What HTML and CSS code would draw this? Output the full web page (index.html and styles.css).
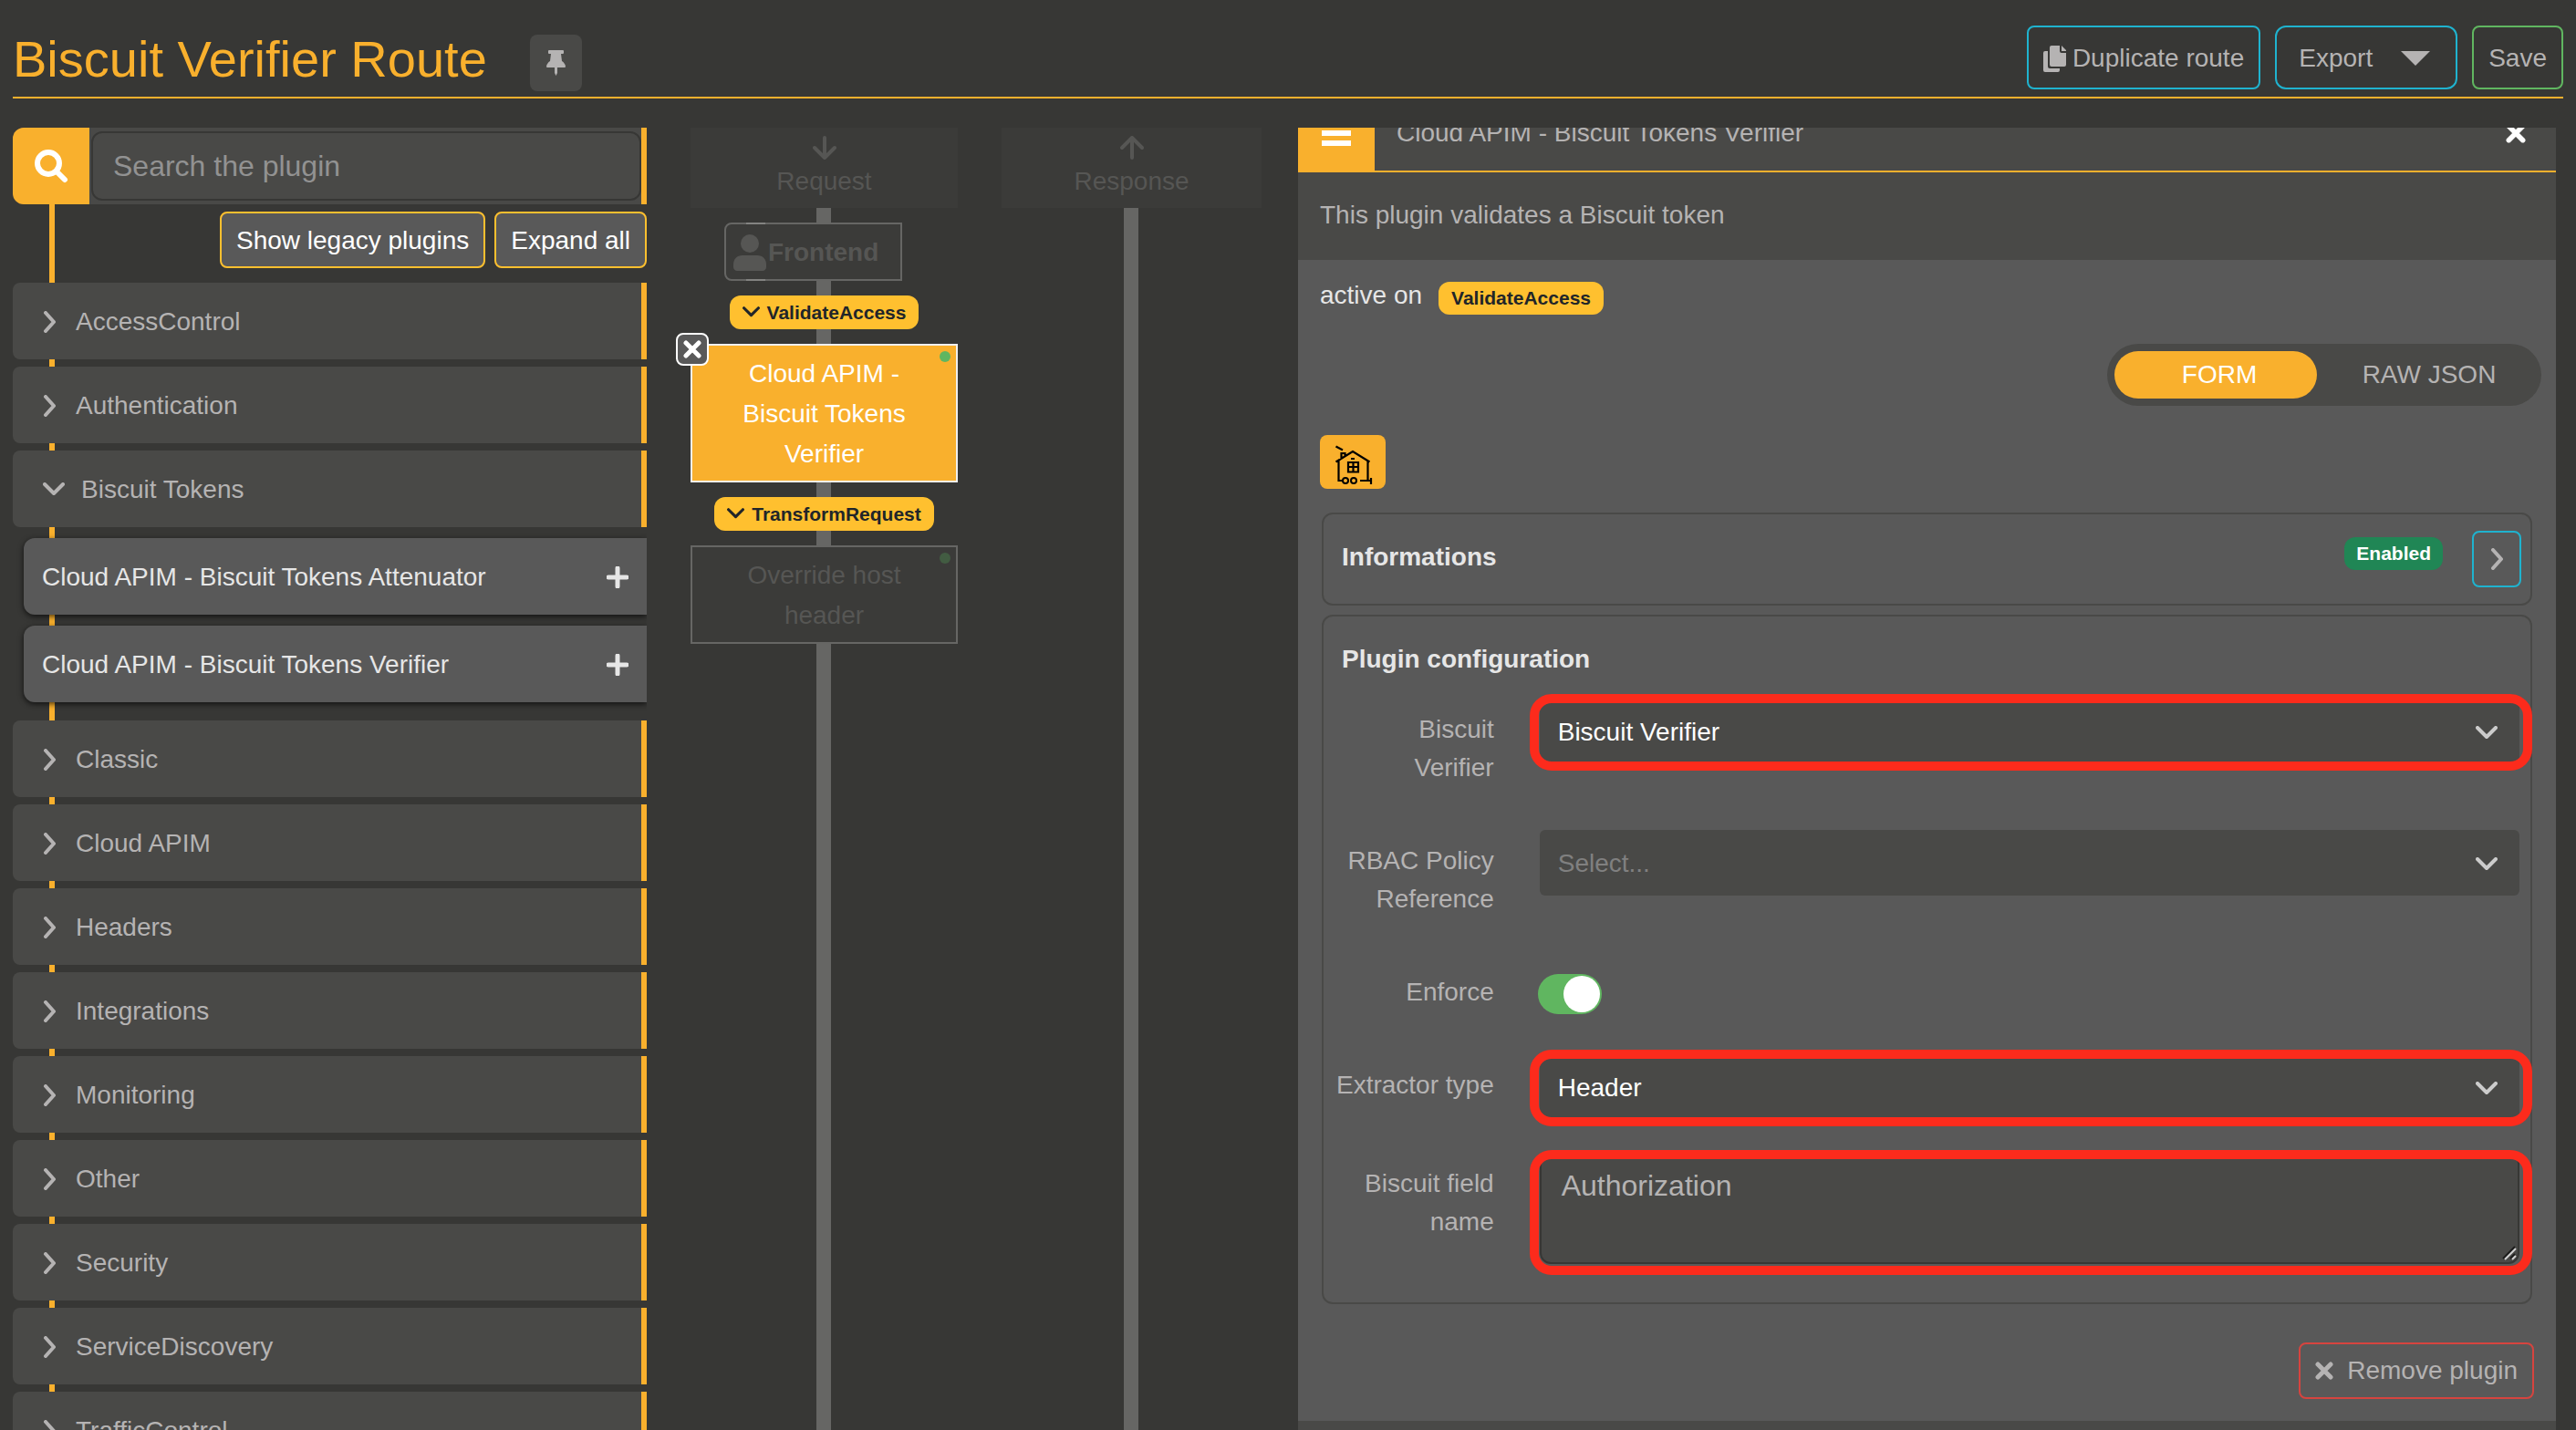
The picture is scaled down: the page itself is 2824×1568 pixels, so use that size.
FILE: index.html
```
<!DOCTYPE html>
<html lang="en">
<head>
<meta charset="utf-8">
<title>Biscuit Verifier Route</title>
<link rel="stylesheet" href="styles.css">
</head>
<body>
<svg class="sprite" aria-hidden="true">
  <symbol id="chevron-right" viewBox="0 0 14 24"><path d="M3 2l9 10-9 10" fill="none" stroke="currentColor" stroke-width="4" stroke-linecap="round" stroke-linejoin="round"/></symbol>
  <symbol id="chevron-down" viewBox="0 0 24 16"><path d="M2 2l10 10L22 2" fill="none" stroke="currentColor" stroke-width="4" stroke-linecap="round" stroke-linejoin="round"/></symbol>
  <symbol id="cross" viewBox="0 0 20 20"><path d="M3 3l14 14M17 3L3 17" fill="none" stroke="currentColor" stroke-width="5" stroke-linecap="round"/></symbol>
  <symbol id="plus" viewBox="0 0 24 24"><path d="M12 2v20M2 12h20" fill="none" stroke="currentColor" stroke-width="5" stroke-linecap="round"/></symbol>
</svg>

<header class="topbar">
  <h1>Biscuit Verifier Route</h1>
  <button class="pin" aria-label="Pin route"><svg width="21" height="28" viewBox="0 0 21 28"><path d="M3 0h15a1 1 0 0 1 1 1v2a1 1 0 0 1-1 1h-2l1 8c2 1 4 4 4 6a1 1 0 0 1-1 1h-8v6l-1.500 3L9 25v-6H1a1 1 0 0 1-1-1c0-2 2-5 4-6l1-8H3a1 1 0 0 1-1-1V1a1 1 0 0 1 1-1z" fill="currentColor"/></svg></button>
  <div class="actions">
    <button class="btn info"><svg width="25" height="29" viewBox="0 0 25 29" fill="currentColor"><path d="M9 0h9v6a2 2 0 0 0 2 2h5v13a2 2 0 0 1-2 2H9a2 2 0 0 1-2-2V2a2 2 0 0 1 2-2zM20 0l5 5v1h-5zM2 6h3v17a2 2 0 0 0 2 2h11v2a2 2 0 0 1-2 2H2a2 2 0 0 1-2-2V8a2 2 0 0 1 2-2z"/></svg>Duplicate route</button>
    <button class="btn info export">Export<svg width="32" height="16" viewBox="0 0 32 16"><path d="M0 0h32L16 16z" fill="currentColor"/></svg></button>
    <button class="btn success">Save</button>
  </div>
</header>

<main class="designer">
  <aside class="catalog">
    <div class="search">
      <label for="q" aria-label="Search"><svg width="38" height="38" viewBox="0 0 38 38" fill="none" stroke="currentColor" stroke-width="6" stroke-linecap="round"><circle cx="16" cy="16" r="12"/><path d="M25 25l9 9"/></svg></label>
      <input id="q" type="text" placeholder="Search the plugin">
    </div>
    <div class="tools">
      <button>Show legacy plugins</button>
      <button>Expand all</button>
    </div>
    <div class="groups">
      <button class="group"><svg class="right"><use href="#chevron-right"/></svg>AccessControl</button>
      <button class="group"><svg class="right"><use href="#chevron-right"/></svg>Authentication</button>
      <button class="group"><svg class="down"><use href="#chevron-down"/></svg>Biscuit Tokens</button>
      <div class="plugins">
        <button>Cloud APIM - Biscuit Tokens Attenuator<svg><use href="#plus"/></svg></button>
        <button>Cloud APIM - Biscuit Tokens Verifier<svg><use href="#plus"/></svg></button>
      </div>
      <button class="group"><svg class="right"><use href="#chevron-right"/></svg>Classic</button>
      <button class="group"><svg class="right"><use href="#chevron-right"/></svg>Cloud APIM</button>
      <button class="group"><svg class="right"><use href="#chevron-right"/></svg>Headers</button>
      <button class="group"><svg class="right"><use href="#chevron-right"/></svg>Integrations</button>
      <button class="group"><svg class="right"><use href="#chevron-right"/></svg>Monitoring</button>
      <button class="group"><svg class="right"><use href="#chevron-right"/></svg>Other</button>
      <button class="group"><svg class="right"><use href="#chevron-right"/></svg>Security</button>
      <button class="group"><svg class="right"><use href="#chevron-right"/></svg>ServiceDiscovery</button>
      <button class="group"><svg class="right"><use href="#chevron-right"/></svg>TrafficControl</button>
    </div>
  </aside>

  <section class="flow">
    <div class="lane">
      <h2><svg width="26" height="26" viewBox="0 0 26 26"><path d="M13 2v22M2 13l11 11 11-11" fill="none" stroke="currentColor" stroke-width="4" stroke-linecap="round" stroke-linejoin="round"/></svg>Request</h2>
      <div class="frontend"><svg width="36" height="40" viewBox="0 0 36 40" fill="currentColor"><circle cx="18" cy="10" r="10"/><path d="M10 23h16c6 0 10 4 10 10v3c0 2-2 4-4 4H4c-2 0-4-2-4-4v-3c0-6 4-10 10-10z"/></svg>Frontend</div>
      <button class="badge step"><svg><use href="#chevron-down"/></svg>ValidateAccess</button>
      <div class="node active">Cloud APIM - Biscuit Tokens Verifier<span class="dot"></span><button class="remove-node" aria-label="Remove"><svg width="20" height="20"><use href="#cross"/></svg></button></div>
      <button class="badge step"><svg><use href="#chevron-down"/></svg>TransformRequest</button>
      <div class="node">Override host header<span class="dot"></span></div>
    </div>
    <div class="lane">
      <h2><svg width="26" height="26" viewBox="0 0 26 26"><path d="M13 24V2M2 13L13 2l11 11" fill="none" stroke="currentColor" stroke-width="4" stroke-linecap="round" stroke-linejoin="round"/></svg>Response</h2>
    </div>
  </section>

  <section class="panel">
    <div class="panel-head">
      <button class="menu" aria-label="Menu"><svg width="32" height="30" viewBox="0 0 32 30"><path d="M2 4h28M2 15h28M2 26h28" stroke="currentColor" stroke-width="6" stroke-linecap="square"/></svg></button>
      <div class="panel-title">Cloud APIM - Biscuit Tokens Verifier<button aria-label="Close"><svg width="22" height="22"><use href="#cross"/></svg></button></div>
    </div>
    <p class="description">This plugin validates a Biscuit token</p>
    <div class="panel-body">
      <div class="active-on">active on <span class="badge">ValidateAccess</span></div>
      <div class="mode">
        <button class="on">FORM</button>
        <button>RAW JSON</button>
      </div>
      <button class="home" aria-label="Home"><svg width="72" height="59" viewBox="0 0 72 59" fill="none" stroke="#000" stroke-width="2"><path d="M17.500 12.500l7.500 4M23.500 26v-6h4v4M17.500 29.500L36 18l18.500 11.500M20.500 28v22H25M52.500 28v22M44 50h12M56 47v7M34 26h4M31 30h11v10.500H31zM36.500 30v10M31 35h11" stroke-width="2.200"/><circle cx="28" cy="50" r="3"/><circle cx="37" cy="50" r="3"/></svg></button>

      <section class="box infos">
        <h3>Informations</h3>
        <span class="badge enabled">Enabled</span>
        <button aria-label="Show informations"><svg class="right"><use href="#chevron-right"/></svg></button>
      </section>

      <form class="box">
        <h3>Plugin configuration</h3>
        <div class="row">
          <label for="verifier">Biscuit Verifier</label>
          <div class="field marked">
            <select id="verifier"><option>Biscuit Verifier</option></select>
            <svg class="down"><use href="#chevron-down"/></svg>
          </div>
        </div>
        <div class="row">
          <label for="rbac">RBAC Policy Reference</label>
          <div class="field">
            <select id="rbac" class="empty"><option>Select...</option></select>
            <svg class="down"><use href="#chevron-down"/></svg>
          </div>
        </div>
        <div class="row">
          <label for="enforce">Enforce</label>
          <div class="field"><input id="enforce" type="checkbox" class="toggle" checked></div>
        </div>
        <div class="row compact">
          <label for="extractor">Extractor type</label>
          <div class="field marked">
            <select id="extractor"><option>Header</option></select>
            <svg class="down"><use href="#chevron-down"/></svg>
          </div>
        </div>
        <div class="row compact">
          <label for="fieldname">Biscuit field name</label>
          <div class="field marked area">
            <textarea id="fieldname">Authorization</textarea>
            <svg class="grip" width="16" height="16" viewBox="0 0 16 16" fill="none" stroke-width="2"><path d="M1 14L14 1M9 14l5-5" stroke="#1c1c1b"/><path d="M3 15L15 3M11 15l4-4" stroke="#d0d0d0"/></svg>
          </div>
        </div>
      </form>

      <button class="remove"><svg width="20" height="20"><use href="#cross"/></svg>Remove plugin</button>
    </div>
  </section>
</main>
</body>
</html>
```
FILE: styles.css
```
:root {
  --bg: #373735;
  --surface: #494947;
  --raised: #595959;
  --brand: #f9b02d;
  --warning: #ffc02f;
  --info: #1fb3cf;
  --success: #60b660;
  --danger: #d6443f;
  --text: #b5b3b3;
  --line: #666664;
}

* { box-sizing: border-box; }

body {
  margin: 0;
  padding: 0 14px;
  height: 100vh;
  overflow: hidden;
  display: flex;
  flex-direction: column;
  background: var(--bg);
  color: var(--text);
  font: 28px/42px "Liberation Sans", Arial, sans-serif;
}

h1, h2, h3, p { margin: 0; font-size: inherit; }

button, input, select, textarea {
  font: inherit;
  color: inherit;
  margin: 0;
  padding: 0;
  border: 0;
  background: none;
}

svg { display: block; flex: none; }
.sprite { position: absolute; width: 0; height: 0; }
svg.right { width: 14px; height: 24px; }
svg.down { width: 24px; height: 16px; }

/* Top bar */
.topbar {
  display: flex;
  align-items: center;
  height: 108px;
  padding-top: 24px;
  border-bottom: 2px solid var(--brand);
  flex: none;
}
.topbar h1 {
  color: var(--brand);
  font-size: 56px;
  line-height: 68px;
  font-weight: 400;
  white-space: nowrap;
}
.pin {
  display: grid;
  place-items: center;
  width: 57px;
  height: 62px;
  margin: 8px 0 0 47px;
  border-radius: 8px;
  background: var(--surface);
}
.actions {
  display: flex;
  gap: 16px;
  margin: 0 0 4px auto;
}
.btn {
  display: flex;
  align-items: center;
  gap: 7px;
  height: 70px;
  padding: 2px 16px 0;
  border: 2px solid var(--info);
  border-radius: 8px;
  white-space: nowrap;
}
.btn.success { border-color: var(--success); }
.btn.export {
  gap: 31px;
  padding: 2px 28px 0 24px;
  border-radius: 12px;
}

/* Three panes */
.designer {
  flex: 1;
  min-height: 0;
  display: grid;
  grid-template-columns: 695fr 634fr 1379fr;
  gap: 40px;
  padding: 32px 8px 0 0;
}
.designer > * { min-width: 0; }
.catalog, .panel { overflow: hidden; }

/* Plugin catalog */
.catalog {
  background: linear-gradient(var(--brand), var(--brand)) 40px 0 / 6px 100% no-repeat;
}
.search {
  display: flex;
  align-items: center;
  height: 84px;
  border-right: 6px solid var(--brand);
  border-radius: 12px 0 0 12px;
  background: var(--surface);
  overflow: hidden;
}
.search label {
  display: grid;
  place-items: center;
  width: 84px;
  height: 84px;
  background: var(--brand);
  color: #fff;
}
.search input {
  flex: 1;
  min-width: 0;
  height: 76px;
  margin-left: 2px;
  padding: 0 22px;
  border: 2px solid var(--bg);
  border-radius: 12px;
  font-size: 32px;
}
.search input::placeholder { color: #929292; opacity: 1; }
.tools {
  display: flex;
  justify-content: flex-end;
  gap: 10px;
  padding: 8px 0 16px;
}
.tools button {
  height: 62px;
  padding: 2px 16px 0;
  border: 2px solid var(--warning);
  border-radius: 8px;
  background: var(--raised);
  color: #fff;
}
.groups {
  display: flex;
  flex-direction: column;
  gap: 8px;
}
.group {
  display: flex;
  align-items: center;
  gap: 22px;
  height: 84px;
  flex: none;
  padding: 2px 0 0 33px;
  border-right: 6px solid var(--brand);
  border-radius: 8px 0 0 8px;
  background: var(--surface);
}
.group .down { margin-right: -4px; }
.plugins {
  display: flex;
  flex-direction: column;
  gap: 12px;
  padding: 4px 0 12px 12px;
}
.plugins button {
  display: flex;
  align-items: center;
  justify-content: space-between;
  height: 84px;
  padding: 2px 20px 0;
  border-radius: 12px 0 0 12px;
  background: var(--raised);
  color: #e6e6e6;
  box-shadow: 0 2px 6px rgba(0, 0, 0, .7);
}
.plugins svg { width: 24px; height: 24px; }

/* Request and response lanes */
.flow {
  display: grid;
  grid-template-columns: 293fr 285fr;
  gap: 48px;
  padding-left: 8px;
}
.lane {
  display: flex;
  flex-direction: column;
  align-items: center;
  gap: 16px;
  background: linear-gradient(var(--line), var(--line)) calc(50% - 1px) 0 / 16px 100% no-repeat;
  line-height: 44px;
}
.lane h2 {
  align-self: stretch;
  display: flex;
  flex-direction: column;
  align-items: center;
  height: 88px;
  padding-top: 9px;
  background: #3b3b39;
  color: #565654;
  font-weight: 400;
}
.lane h2 svg { margin-bottom: 2px; }
.frontend {
  position: relative;
  display: flex;
  align-items: center;
  gap: 2px;
  width: 195px;
  height: 64px;
  margin-right: 24px;
  padding: 2px 0 0 8px;
  border: 2px solid var(--line);
  border-radius: 8px 0 0 8px;
  background: #3b3b39;
  color: #565654;
  font-weight: 700;
}
/* Brighter edge where the icon tab overlaps the frame */
.frontend::before {
  content: "";
  position: absolute;
  inset: -2px auto -2px 22px;
  width: 21px;
  border: solid #838381;
  border-width: 2px 0;
}
.badge {
  display: inline-flex;
  align-items: center;
  height: 36px;
  padding: 0 14px;
  border-radius: 12px;
  background: var(--warning);
  color: #212529;
  font-size: 21px;
  line-height: 24px;
  font-weight: 700;
}
.step { gap: 8px; height: 37px; }
.step svg { width: 19px; height: 13px; }
.node {
  position: relative;
  align-self: stretch;
  padding: 9px 48px 7px;
  border: 2px solid var(--line);
  background: #3b3b39;
  color: #565654;
  text-align: center;
}
.node.active {
  border-color: #f0f0f0;
  background: var(--brand);
  color: #fff;
}
.dot {
  position: absolute;
  top: 6px;
  right: 6px;
  width: 12px;
  height: 12px;
  border-radius: 50%;
  background: #425c42;
}
.active .dot { background: var(--success); }
.remove-node {
  position: absolute;
  top: -14px;
  left: -18px;
  display: grid;
  place-items: center;
  width: 36px;
  height: 36px;
  border: 2px solid #fff;
  border-radius: 8px;
  background: var(--raised);
}

/* Plugin panel */
.panel { background: var(--surface); }
.panel-head {
  display: flex;
  height: 86px;
  margin-top: -37px;
}
.menu {
  display: grid;
  place-items: center;
  width: 84px;
  background: var(--brand);
  color: #fff;
}
.panel-title {
  flex: 1;
  display: flex;
  align-items: center;
  justify-content: space-between;
  padding: 2px 33px 0 24px;
  border-bottom: 2px solid var(--brand);
}
.panel-title button { color: #fff; }
.description {
  height: 96px;
  padding: 26px 24px;
}
.panel-body {
  display: flex;
  flex-direction: column;
  align-items: flex-start;
  padding: 18px 24px 24px;
  background: var(--raised);
}
.active-on {
  display: flex;
  align-items: flex-start;
  gap: 18px;
  color: #e6e6e6;
}
.active-on .badge { margin-top: 6px; }
.mode {
  align-self: flex-end;
  display: flex;
  align-items: center;
  width: 476px;
  height: 68px;
  margin: 32px -8px 32px 0;
  padding: 0 8px;
  border-radius: 34px;
  background: var(--surface);
}
.mode button {
  flex: 1;
  height: 52px;
  padding-left: 8px;
  border-radius: 26px;
}
.mode .on {
  flex: none;
  width: 222px;
  background: var(--brand);
  color: #fff;
}
.home {
  border-radius: 8px;
  background: var(--brand);
}
.box {
  width: calc(100% - 4px);
  margin: 10px 2px 0;
  border: 2px solid var(--surface);
  border-radius: 12px;
}
.box h3 {
  color: #e6e6e6;
  padding: 26px 20px 22px;
}
.infos {
  display: flex;
  align-items: flex-start;
  height: 102px;
  margin-top: 26px;
}
.infos h3 { flex: 1; }
.infos .badge {
  margin: 25px 32px 0 0;
  padding: 0 13px;
  background: #208655;
  color: #fff;
}
.infos button {
  display: grid;
  place-items: center;
  width: 54px;
  height: 62px;
  margin: 18px 10px 0 0;
  border: 2px solid var(--info);
  border-radius: 8px;
}
.row {
  display: grid;
  grid-template-columns: 184fr 1076fr;
  align-items: start;
  gap: 50px;
  padding: 0 12px 47px 3px;
}
.row.compact { padding-bottom: 36px; }
.row label {
  padding: 13px 0 0 8px;
  text-align: right;
}
.field { position: relative; }
.field select {
  display: block;
  width: 100%;
  height: 72px;
  padding: 2px 20px 0;
  border-radius: 6px;
  appearance: none;
  background: var(--surface);
  color: #fff;
}
.field select.empty { color: #808080; }
.field .down {
  position: absolute;
  top: 30px;
  right: 24px;
  color: #ccc;
  pointer-events: none;
}
.marked::after {
  content: "";
  position: absolute;
  inset: -5px -14px -7px -11px;
  border: 10px solid #fc2b1c;
  border-radius: 24px;
  pointer-events: none;
}
.field textarea {
  display: block;
  width: 100%;
  height: 122px;
  padding: 10px 22px;
  border: 2px solid var(--bg);
  border-radius: 12px;
  background: var(--surface);
  font-size: 32px;
  line-height: 48px;
  resize: none;
}
.grip {
  position: absolute;
  right: 3px;
  bottom: 4px;
  pointer-events: none;
}
.area::after { inset: -3px -14px -12px -11px; }
.area { margin-bottom: 6px; }
.toggle {
  display: block;
  appearance: none;
  width: 70px;
  height: 44px;
  margin: 14px 0 -3px -2px;
  padding: 2px;
  border-radius: 22px;
  background: var(--success);
}
.toggle::before {
  content: "";
  display: block;
  width: 40px;
  height: 40px;
  margin-left: 26px;
  border-radius: 50%;
  background: #fff;
}
.remove {
  align-self: flex-end;
  display: flex;
  align-items: center;
  gap: 15px;
  height: 62px;
  margin-top: 42px;
  padding: 0 16px;
  border: 2px solid var(--danger);
  border-radius: 8px;
}
```
